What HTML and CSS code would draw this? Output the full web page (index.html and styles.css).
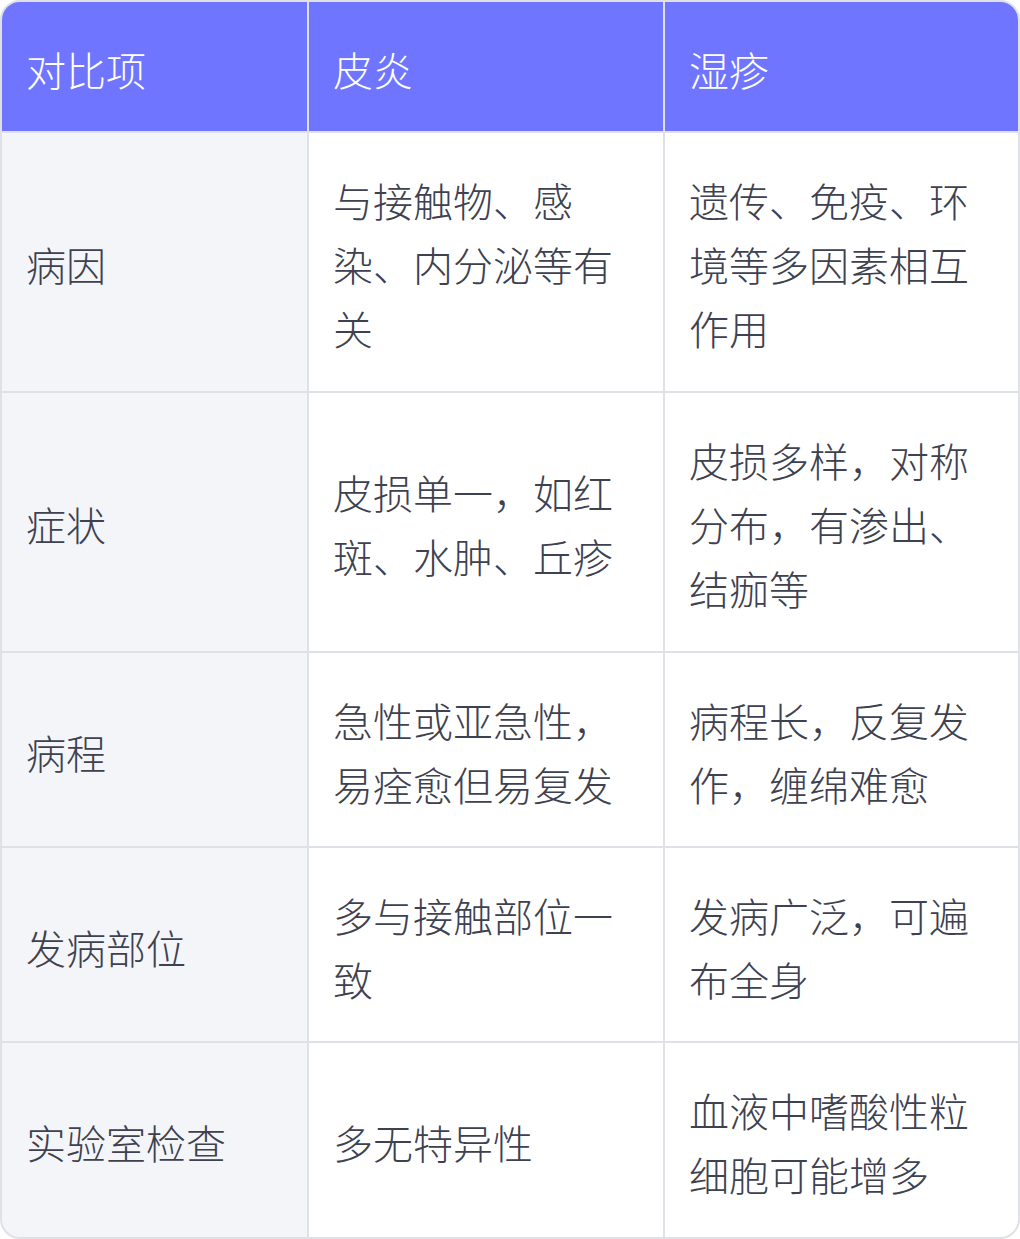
FILE: index.html
```html
<!DOCTYPE html>
<html lang="zh-CN">
<head>
<meta charset="utf-8">
<title>皮炎与湿疹对比</title>
<link rel="stylesheet" href="styles.css">
</head>
<body>
<div class="table">
  <div class="cell head">对比项</div>
  <div class="cell head">皮炎</div>
  <div class="cell head">湿疹</div>

  <div class="cell label">病因</div>
  <div class="cell">与接触物、感染、内分泌等有关</div>
  <div class="cell">遗传、免疫、环境等多因素相互作用</div>

  <div class="cell label">症状</div>
  <div class="cell">皮损单一，如红斑、水肿、丘疹</div>
  <div class="cell">皮损多样，对称分布，有渗出、结痂等</div>

  <div class="cell label">病程</div>
  <div class="cell">急性或亚急性，易痊愈但易复发</div>
  <div class="cell">病程长，反复发作，缠绵难愈</div>

  <div class="cell label">发病部位</div>
  <div class="cell">多与接触部位一致</div>
  <div class="cell">发病广泛，可遍布全身</div>

  <div class="cell label">实验室检查</div>
  <div class="cell">多无特异性</div>
  <div class="cell">血液中嗜酸性粒细胞可能增多</div>
</div>
</body>
</html>
```

FILE: styles.css
```css
html, body {
  margin: 0;
  padding: 0;
  background: #ffffff;
}

.table {
  width: 1020px;
  height: 1239px;
  box-sizing: border-box;
  border: 2px solid #e0e1e6;
  border-radius: 20px;
  overflow: hidden;
  background: #e0e1e6;
  display: grid;
  grid-template-columns: 305px 354px 353px;
  grid-template-rows: 129px 258px 258px 193px 193px 1fr;
  gap: 2px;
  font-family: "Noto Sans CJK SC", "Noto Sans", sans-serif;
  font-size: 40px;
  font-weight: 300;
  line-height: 64px;
  color: #3d4150;
}

.cell {
  background: #ffffff;
  padding: 34px 24px 30px 24px;
  display: flex;
  align-items: center;
  box-sizing: border-box;
}

.head {
  background: #7075ff;
  color: #ffffff;
}

.label {
  background: #f4f5f9;
}
```
